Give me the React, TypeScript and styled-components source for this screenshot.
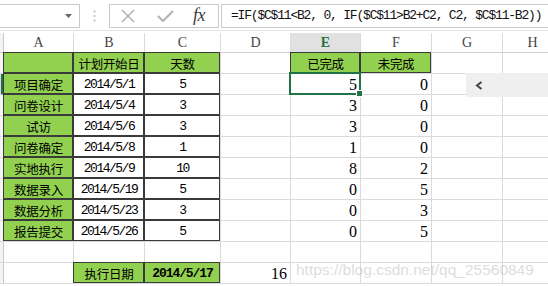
import React from "react";
import styled, { createGlobalStyle, css } from "styled-components";

const GlobalStyle = createGlobalStyle`
  html, body {
    margin: 0;
    padding: 0;
    background: #ffffff;
  }
  body {
    font-family: "Liberation Sans", Arial, sans-serif;
  }
`;

const GREEN = "#92d050";
const ACCENT = "#217346";
const GRID = "#dadada";

type Kind = "cjk" | "date" | "bold" | "num" | "small";
type Align = "left" | "center" | "right";

interface CellData {
  text?: string;
  kind?: Kind;
  align?: Align;
  fill?: boolean;
  boxed?: boolean;
  selected?: boolean;
}

const tasks = [
  ["项目确定", "2014/5/1", "5", "5", "0"],
  ["问卷设计", "2014/5/4", "3", "3", "0"],
  ["试访", "2014/5/6", "3", "3", "0"],
  ["问卷确定", "2014/5/8", "1", "1", "0"],
  ["实地执行", "2014/5/9", "10", "8", "2"],
  ["数据录入", "2014/5/19", "5", "0", "5"],
  ["数据分析", "2014/5/23", "3", "0", "3"],
  ["报告提交", "2014/5/26", "5", "0", "5"],
];

const columns = ["A", "B", "C", "D", "E", "F", "G", "H"];

function buildRows(): CellData[][] {
  const rows: CellData[][] = [];
  rows.push([
    { fill: true, boxed: true },
    { text: "计划开始日", kind: "cjk", fill: true, boxed: true },
    { text: "天数", kind: "cjk", fill: true, boxed: true },
    {},
    { text: "已完成", kind: "cjk", fill: true, boxed: true },
    { text: "未完成", kind: "cjk", fill: true, boxed: true },
    {},
    {},
  ]);
  tasks.forEach(([name, date, days, done, left], i) => {
    rows.push([
      { text: name, kind: "cjk", fill: true, boxed: true },
      { text: date, kind: "date", boxed: true },
      { text: days, kind: "small", boxed: true },
      {},
      { text: done, kind: "num", align: "right", selected: i === 0 },
      { text: left, kind: "num", align: "right" },
      {},
      {},
    ]);
  });
  rows.push([{}, {}, {}, {}, {}, {}, {}, {}]);
  rows.push([
    {},
    { text: "执行日期", kind: "cjk", fill: true, boxed: true },
    { text: "2014/5/17", kind: "bold", fill: true, boxed: true },
    { text: "16", kind: "num", align: "right" },
    {},
    {},
    {},
    {},
  ]);
  return rows;
}

function App() {
  const rows = buildRows();

  return (
    <>
      <GlobalStyle />
      <Window>
        <Toolbar>
          <NameBox>
            <Caret width="7" height="4" viewBox="0 0 7 4">
              <path d="M0 0 L7 0 L3.5 4 Z" fill="#666" />
            </Caret>
          </NameBox>
          <Dots width="3" height="12" viewBox="0 0 3 12">
            <circle cx="1.5" cy="1.5" r="1" fill="#b5b5b5" />
            <circle cx="1.5" cy="6" r="1" fill="#b5b5b5" />
            <circle cx="1.5" cy="10.5" r="1" fill="#b5b5b5" />
          </Dots>
          <FuncBox>
            <svg width="14" height="14" viewBox="0 0 14 14">
              <path d="M1 1 L13 13 M13 1 L1 13" stroke="#a8a8a8" strokeWidth="1.3" fill="none" />
            </svg>
            <svg width="17" height="12" viewBox="0 0 17 12">
              <path d="M1 6 L6 11 L16 1" stroke="#b4b4b4" strokeWidth="2.2" fill="none" />
            </svg>
            <Fx>fx</Fx>
          </FuncBox>
          <FormulaBox>=IF($C$11&lt;B2, 0, IF($C$11&gt;B2+C2, C2, $C$11-B2))</FormulaBox>
        </Toolbar>

        <Sheet>
          <Corner />
          {columns.map((c) => (
            <ColHeader key={c} $active={c === "E"}>
              {c}
            </ColHeader>
          ))}
          {rows.map((row, r) => (
            <React.Fragment key={r}>
              <RowHeader $active={r === 1} />
              {row.map((cell, c) => (
                <Cell
                  key={c}
                  $fill={cell.fill}
                  $boxed={cell.boxed}
                  $kind={cell.kind}
                  $align={cell.align ?? "center"}
                >
                  {cell.text}
                  {cell.selected && (
                    <Selection>
                      <FillHandle />
                    </Selection>
                  )}
                </Cell>
              ))}
            </React.Fragment>
          ))}
        </Sheet>

        <SidePanel>
          <svg width="8" height="9" viewBox="0 0 8 9">
            <path d="M6.5 1 L2 4.5 L6.5 8" stroke="#444" strokeWidth="2" fill="none" />
          </svg>
        </SidePanel>
        <Watermark>https://blog.csdn.net/qq_25560849</Watermark>
      </Window>
    </>
  );
}

const Window = styled.div`
  position: relative;
  width: 548px;
  height: 286px;
  overflow: hidden;
  background: #fff;
`;

const Toolbar = styled.div`
  display: flex;
  align-items: center;
  box-sizing: border-box;
  height: 31px;
  padding-top: 1px;
  border-bottom: 1px solid #e2e2e2;
  margin-bottom: 2px;
`;

const boxBase = css`
  box-sizing: border-box;
  height: 24px;
  border: 1px solid #c9c9c9;
  background: #fff;
  display: flex;
  align-items: center;
`;

const NameBox = styled.div`
  ${boxBase};
  width: 81px;
  margin-left: -1px;
  justify-content: flex-end;
  padding-right: 7px;
`;

const Caret = styled.svg`
  display: block;
`;

const Dots = styled.svg`
  margin: 0 13px 0 13px;
`;

const FuncBox = styled.div`
  ${boxBase};
  width: 110px;
  padding-left: 11px;

  svg:first-child {
    margin-right: 22px;
  }
`;

const Fx = styled.span`
  font-family: "Liberation Serif", "Times New Roman", serif;
  font-style: italic;
  font-size: 18px;
  color: #3c3c3c;
  margin-left: 19px;
  letter-spacing: -0.5px;
`;

const FormulaBox = styled.div`
  ${boxBase};
  flex: 1;
  margin-left: 2px;
  margin-right: -2px;
  padding-left: 9px;
  font-family: "Liberation Mono", "Courier New", monospace;
  font-size: 13px;
  letter-spacing: -1.2px;
  color: #111;
  white-space: nowrap;
  overflow: hidden;
`;

const Sheet = styled.div`
  display: grid;
  grid-template-columns: 4px 70px 71px 76px 70px 70px 71px 71px 60px;
  grid-template-rows: 20px repeat(11, 21px);
`;

const Corner = styled.div`
  background: #f3f3f3;
  border-right: 1px solid #c9c9c9;
  border-bottom: 1px solid #c9c9c9;
  box-sizing: border-box;
`;

const ColHeader = styled.div<{ $active?: boolean }>`
  box-sizing: border-box;
  display: flex;
  align-items: center;
  justify-content: center;
  border-right: 1px solid ${GRID};
  border-bottom: 1px solid #cfcfcf;
  font-family: "Liberation Serif", "Times New Roman", serif;
  font-size: 14px;
  padding-top: 1px;
  background: ${(p) => (p.$active ? "#e1e1e1" : "#fff")};
  color: ${(p) => (p.$active ? ACCENT : "#444")};
  font-weight: ${(p) => (p.$active ? 700 : 400)};
`;

const RowHeader = styled.div<{ $active?: boolean }>`
  box-sizing: border-box;
  border-bottom: 1px solid ${GRID};
  border-right: 1px solid #c9c9c9;
  background: ${(p) => (p.$active ? "#d9d9d9" : "#f3f3f3")};
  ${(p) =>
    p.$active &&
    css`
      border-right: 3px solid ${ACCENT};
    `}
`;

const kindStyles: Record<Kind, ReturnType<typeof css>> = {
  cjk: css`
    font-family: "Noto Sans CJK SC", "Liberation Sans", sans-serif;
    font-size: 12.5px;
    letter-spacing: -0.3px;
  `,
  date: css`
    font-family: "Liberation Mono", "Courier New", monospace;
    font-size: 13px;
    letter-spacing: -1.5px;
  `,
  small: css`
    font-family: "Liberation Mono", "Courier New", monospace;
    font-size: 13px;
    letter-spacing: -1.5px;
  `,
  bold: css`
    font-family: "Liberation Mono", "Courier New", monospace;
    font-size: 13px;
    font-weight: 700;
    letter-spacing: -1.1px;
  `,
  num: css`
    font-family: "Liberation Serif", "Times New Roman", serif;
    font-size: 16px;
    padding-top: 2px;
  `,
};

const justify: Record<Align, string> = {
  left: "flex-start",
  center: "center",
  right: "flex-end",
};

const Cell = styled.div<{
  $fill?: boolean;
  $boxed?: boolean;
  $kind?: Kind;
  $align: Align;
}>`
  position: relative;
  box-sizing: border-box;
  display: flex;
  align-items: center;
  justify-content: ${(p) => justify[p.$align]};
  padding: 0 3px;
  border-right: 1px solid ${GRID};
  border-bottom: 1px solid ${GRID};
  background: ${(p) => (p.$fill ? GREEN : "#fff")};
  color: #000;
  white-space: nowrap;
  ${(p) => p.$kind && kindStyles[p.$kind]};

  ${(p) =>
    p.$boxed &&
    css`
      &::after {
        content: "";
        position: absolute;
        top: -1px;
        left: -1px;
        right: 0;
        bottom: 0;
        border: 1px solid #3a3a3a;
        z-index: 1;
        pointer-events: none;
      }
    `}
`;

const Selection = styled.span`
  position: absolute;
  top: -2px;
  left: -2px;
  right: -1px;
  bottom: -1px;
  border: 2px solid ${ACCENT};
  z-index: 2;
  pointer-events: none;
`;

const FillHandle = styled.span`
  position: absolute;
  right: -4px;
  bottom: -4px;
  width: 5px;
  height: 5px;
  background: ${ACCENT};
  border: 1px solid #fff;
`;

const SidePanel = styled.div`
  position: absolute;
  left: 466px;
  top: 73px;
  width: 82px;
  height: 24px;
  background: #efefef;
  display: flex;
  align-items: center;
  padding-left: 9px;
  box-sizing: border-box;
  z-index: 3;
`;

const Watermark = styled.div`
  position: absolute;
  left: 296px;
  top: 261px;
  font-family: "Liberation Sans", Arial, sans-serif;
  font-size: 15.5px;
  color: rgba(185, 185, 185, 0.5);
  white-space: nowrap;
  z-index: 3;
  pointer-events: none;
`;

export default App;
